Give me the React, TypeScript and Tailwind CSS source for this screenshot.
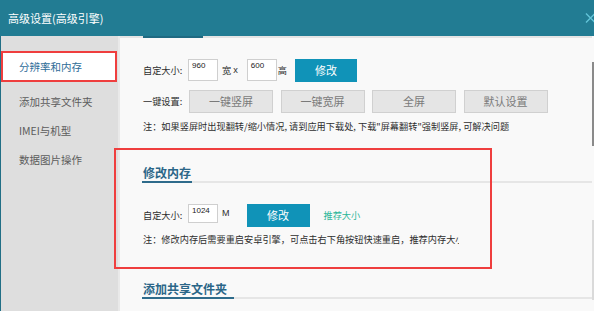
const font = "font-['Noto_Sans_CJK_SC',sans-serif]";

// 区块标题：深色下划线 + 浅灰分隔线
function SectionHead({ title, line }: { title: string; line: string }) {
  return (
    <div className="ml-[22px]">
      <div className="pl-[1px] h-[16px] leading-[16px] text-[12px] font-bold text-[#2b6688]">
        {title}
      </div>
      <div className="flex h-[2px] bg-[#e6e6e6]">
        <div className={`${line} h-[2px] bg-[#2e6b8b]`} />
      </div>
    </div>
  );
}

function SizeInput({ value }: { value: string }) {
  return (
    <div className="w-[30px] bg-white border border-[#cfcfcf] pl-[3px] pt-[1px] text-[8px] leading-[10px] font-['Liberation_Sans',sans-serif] text-[#222]">
      {value}
    </div>
  );
}

export default function App() {
  const presets = ["一键竖屏", "一键宽屏", "全屏", "默认设置"];
  const menu = ["添加共享文件夹", "IMEI与机型", "数据图片操作"];

  return (
    <div
      className={`${font} relative w-[594px] h-[311px] overflow-hidden flex flex-col bg-[#f9f9f9] text-[#2e2e2e]`}
    >
      {/* 标题栏 */}
      <div className="h-[36px] shrink-0 bg-[#227c93] flex items-center justify-between pl-[8px]">
        <span className="text-[11px] leading-[14px] text-white">高级设置(高级引擎)</span>
        <svg width="12" height="10" viewBox="0 0 12 10" className="mr-[-3px] mt-[-1px]">
          <path d="M1 0.5 L10 9.5 M10 0.5 L1 9.5" stroke="#62c4d8" strokeWidth="1.4" />
        </svg>
      </div>

      <div className="flex flex-1 min-h-0">
        <div className="w-[1px] bg-[#216f86]" />

        {/* 左侧菜单 */}
        <aside className="w-[117px] shrink-0 bg-[#dedede] pt-[15px] text-[10.5px]">
          <div className="w-[116px] h-[31px] border-2 border-[#ef3e3e] bg-white pl-[16px] flex items-center text-[#2f6d98]">
            分辨率和内存
          </div>
          <div className="mt-[5px]">
            {menu.map((m) => (
              <div key={m} className="h-[29px] pl-[18px] flex items-center text-[#5c5c5c]">
                {m}
              </div>
            ))}
          </div>
        </aside>
        <div className="w-[2px] bg-[#e9e9e9]" />

        {/* 内容区 */}
        <main className="flex-1 flex min-w-0">
          <div className="flex-1 min-w-0">
            <div className="h-[2px] bg-[#e4e4e4] flex">
              <div className="ml-[23px] w-[60px] h-[2px] bg-[#1f6a82]" />
            </div>

            <div className="pl-[23px] text-[9.2px]">
              <div className="mt-[21px] h-[23px] flex items-center">
                <span className="w-[45px]">自定大小:</span>
                <div className="h-[22px] flex self-start">
                  <SizeInput value="960" />
                </div>
                <span className="ml-[4px]">宽</span>
                <span className="ml-[2px] font-['Liberation_Sans',sans-serif]">x</span>
                <div className="ml-[9px] h-[22px] flex self-start">
                  <SizeInput value="600" />
                </div>
                <span className="ml-[1px]">高</span>
                <button className="ml-[8px] w-[62px] h-[23px] bg-[#1093b8] text-white text-[11px]">
                  修改
                </button>
              </div>

              <div className="mt-[8px] h-[23px] flex items-center">
                <span className="w-[46px]">一键设置:</span>
                <div className="flex gap-[7.5px]">
                  {presets.map((p) => (
                    <button
                      key={p}
                      className="w-[84px] h-[23px] bg-[#e5e5e5] border border-[#d0d0d0] text-[#7a7a7a] text-[11px]"
                    >
                      {p}
                    </button>
                  ))}
                </div>
              </div>

              <div className="mt-[7px] h-[12px] leading-[12px] whitespace-nowrap">
                注：如果竖屏时出现翻转/缩小情况, 请到应用下载处, 下载"屏幕翻转"强制竖屏, 可解决问题
              </div>
            </div>

            <div className="mt-[33px]">
              <SectionHead title="修改内存" line="w-[50px]" />
            </div>

            <div className="pl-[23px] text-[9.2px]">
              <div className="mt-[21px] h-[23px] flex items-center">
                <span className="w-[45px]">自定大小:</span>
                <div className="h-[19px] flex self-start">
                  <SizeInput value="1024" />
                </div>
                <span className="ml-[4px] font-['Liberation_Sans',sans-serif] text-[9px] self-start mt-[3px]">
                  M
                </span>
                <button className="ml-[17px] w-[63px] h-[23px] bg-[#1093b8] text-white text-[11px]">
                  修改
                </button>
                <span className="ml-[14px] text-[#2db79a]">推荐大小</span>
              </div>
              <div className="mt-[6px] h-[12px] leading-[12px] w-[316px] overflow-hidden whitespace-nowrap">
                注：修改内存后需要重启安卓引擎，可点击右下角按钮快速重启，推荐内存大小
              </div>
            </div>

            <div className="mt-[36px]">
              <SectionHead title="添加共享文件夹" line="w-[92px]" />
            </div>
          </div>

          {/* 滚动条 */}
          <div className="w-[2px] flex flex-col">
            <div className="h-[26px]" />
            <div className="h-[84px] bg-[#8a8a8a]" />
            <div className="h-[74px]" />
            <div className="h-[80px] bg-[#dadada]" />
          </div>
        </main>
      </div>

      {/* 标注框 */}
      <div className="absolute left-[114px] top-[148px] w-[378px] h-[121px] border-2 border-[#ef3e3e] pointer-events-none" />
    </div>
  );
}
